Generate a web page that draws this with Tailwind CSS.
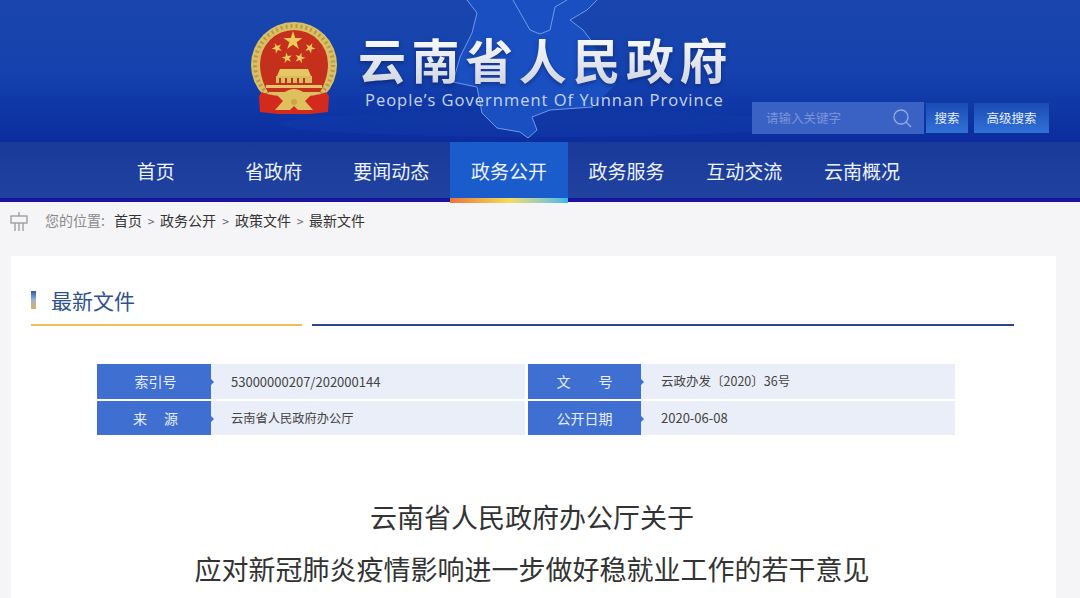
<!DOCTYPE html>
<html lang="zh">
<head>
<meta charset="utf-8">
<script src="https://cdn.jsdelivr.net/npm/@tailwindcss/browser@4"></script>
</head>
<body class="m-0">
<div class="relative w-[1080px] h-[598px] overflow-hidden bg-[#f5f5f7] font-['Noto_Sans_CJK_SC','Liberation_Sans',sans-serif]">

  <!-- header -->
  <header class="relative h-[142px] overflow-hidden bg-gradient-to-b from-[#1a45ad] via-[#1442ae] to-[#0c2c9e]">
    <svg class="absolute inset-0" width="1080" height="142" viewBox="0 0 1080 142" fill="none">
      <ellipse cx="540" cy="124" rx="260" ry="13" fill="#1c4ab4" opacity=".22"/>
      <ellipse cx="540" cy="117" rx="200" ry="9" fill="#0f379f" opacity=".5"/>
      <path d="M467 0 477 13 472 33 460 57 453 82 477 87 482 113 497 128 520 132 528 138 537 130 532 117 550 110 593 107 617 83 604 70 593 43 583 30 570 20 587 10 597 0Z" fill="#1a4fc2"/>
      <path d="M467 0 477 13 472 33 460 57 453 82 477 87 482 113 497 128 520 132 528 138 537 130 532 117 550 110 593 107 M513 0 530 30 540 34 550 30 555 7 567 0 M597 0 587 10 570 20 583 30 593 43" stroke="#6f9ae6" stroke-width="1"/>
    </svg>
    <div class="relative flex items-start pl-[250px]">
      <svg class="mt-[22px] shrink-0" width="88" height="94" viewBox="0 0 88 94">
        <defs>
          <polygon id="s" points="0,-1 .225,-.309 .951,-.309 .363,.118 .588,.809 0,.382 -.588,.809 -.363,.118 -.951,-.309 -.225,-.309" fill="#eec85c"/>
        </defs>
        <circle cx="44" cy="43" r="43" fill="#d9c067"/>
        <circle cx="44" cy="43" r="39" fill="none" stroke="#a98a34" stroke-width="4" stroke-dasharray="2 3" opacity=".7"/>
        <path d="M10 42a34 34 0 0 1 68 0c0 10-3 20-8 28H18c-5-8-8-18-8-28Z" fill="#c5301c"/>
        <use href="#s" transform="translate(43 19) scale(10)"/>
        <use href="#s" transform="translate(27 26) rotate(-25) scale(5.5)"/>
        <use href="#s" transform="translate(60 26) rotate(25) scale(5.5)"/>
        <use href="#s" transform="translate(37 36) rotate(-10) scale(5.5)"/>
        <use href="#s" transform="translate(50 36) rotate(15) scale(5.5)"/>
        <path d="M30 47h28l3 7H27Z" fill="#e6c766"/>
        <rect x="26" y="54" width="36" height="7" fill="#dcbc58"/>
        <path d="M29 56h2v5h-2Zm6 0h2v5h-2Zm6 0h2v5h-2Zm6 0h2v5h-2Zm6 0h2v5h-2Z" fill="#b3362a"/>
        <rect x="16" y="63" width="56" height="3" fill="#e4c76a"/>
        <path d="M12 70 9 74 10 90 28 92H60L78 90 79 74 76 70C66 76 22 76 12 70Z" fill="#d22a1d"/>
        <path d="M27 73c5-1 11-6 17-6s12 5 17 6l-6 6 8 9H48l-4-4-4 4H25l8-9Z" fill="#e0c05e"/>
        <circle cx="44" cy="80" r="3" fill="#c9a548"/>
      </svg>
      <div class="ml-[22px] w-[370px] shrink-0">
        <div class="mt-[31px] h-[54px] text-[48px] leading-[54px] font-bold tracking-[5.6px] -ml-[2px] whitespace-nowrap text-transparent bg-clip-text bg-gradient-to-b from-[#ffffff] to-[#d0d5e2] drop-shadow-[0_2px_2px_rgba(0,0,30,0.35)]">云南省人民政府</div>
        <div class="ml-[5px] mt-[4px] text-[16.5px] leading-[22px] tracking-[1px] whitespace-nowrap text-[#c5d4f2] font-['Open_Sans',sans-serif]">People’s Government Of Yunnan Province</div>
      </div>
      <div class="ml-[22px] mt-[102px] flex shrink-0">
        <div class="flex items-center justify-between w-[172px] h-[32px] pl-[14px] pr-[12px] bg-[#3a62c4] text-[12.5px] text-[#7a93d8]">
          <span>请输入关键字</span>
          <svg width="19" height="19" viewBox="0 0 19 19" fill="none" stroke="#93abdf" stroke-width="1.3"><circle cx="8" cy="8" r="7"/><path d="M13 13l5 5"/></svg>
        </div>
        <div class="ml-[2px] mt-[1px] flex items-center justify-center w-[42px] h-[30px] bg-gradient-to-b from-[#1a4bb4] to-[#3272d8] text-[12.5px] text-[#e6edfa]">搜索</div>
        <div class="ml-[6px] mt-[1px] flex items-center justify-center w-[75px] h-[30px] bg-gradient-to-b from-[#1a4bb4] to-[#3272d8] text-[12.5px] text-[#e6edfa]">高级搜索</div>
      </div>
    </div>
  </header>

  <!-- nav -->
  <nav class="h-[60px] bg-gradient-to-b from-[#1a3a9a] to-[#20429f] border-b-[4px] border-[#1a12a0]">
    <ul class="flex pl-[97px] h-[56px] text-[19px] text-[#eef3fc]">
      <li class="w-[117.7px] pt-[2px] flex items-center justify-center">首页</li>
      <li class="w-[117.7px] pt-[2px] flex items-center justify-center">省政府</li>
      <li class="w-[117.7px] pt-[2px] flex items-center justify-center">要闻动态</li>
      <li class="relative w-[117.7px] pt-[2px] flex items-center justify-center bg-[#1b5ccd]">政务公开
        <span class="absolute left-0 right-0 -bottom-[5px] h-[5px] bg-gradient-to-r from-[#e8743a] via-[#f2dc5a] to-[#35b6ec]"></span>
      </li>
      <li class="w-[117.7px] pt-[2px] flex items-center justify-center">政务服务</li>
      <li class="w-[117.7px] pt-[2px] flex items-center justify-center">互动交流</li>
      <li class="w-[117.7px] pt-[2px] flex items-center justify-center">云南概况</li>
    </ul>
  </nav>

  <!-- breadcrumb -->
  <div class="flex items-center h-[54px] pl-[10px] pb-[17px] text-[14px] text-[#333]">
    <svg class="mt-[2px] shrink-0" width="18" height="20" viewBox="0 0 18 20" fill="none" stroke="#999" stroke-width="1.3"><rect x="1" y="4" width="16" height="7"/><path d="M9 0v4M5 11v8M9 11v8M13 11v8"/></svg>
    <span class="ml-[17px] w-[69px] whitespace-nowrap text-[#8a8a8a]">您的位置:</span>
    <span>首页</span>
    <span class="w-[18px] text-center text-[12px] text-[#667]">&gt;</span>
    <span>政务公开</span>
    <span class="w-[19px] text-center text-[12px] text-[#667]">&gt;</span>
    <span>政策文件</span>
    <span class="w-[18px] text-center text-[12px] text-[#667]">&gt;</span>
    <span>最新文件</span>
  </div>

  <!-- card -->
  <main class="ml-[11px] w-[1045px] h-[400px] bg-white pt-[28px]">
    <div class="ml-[20px] flex items-center h-[34px]">
      <span class="w-[5px] h-[18px] -mt-[2px] bg-gradient-to-b from-[#2c55b0] via-[#9fb1cf] to-[#d8b050]"></span>
      <h2 class="ml-[15px] -mt-[3px] text-[21px] leading-[34px] text-[#2f528f] font-normal">最新文件</h2>
    </div>
    <div class="ml-[20px] mt-[6px] flex gap-[10px] h-[2px]">
      <span class="w-[271px] bg-[#f0be58]"></span>
      <span class="w-[702px] bg-[#29468f]"></span>
    </div>

    <div class="ml-[86px] mt-[38px] w-[858px] grid grid-cols-[428px_427px] gap-x-[3px] gap-y-[2px] text-[#444]">
      <div class="flex h-[35px]">
        <div class="relative w-[114px] pl-[3px] flex items-center justify-center bg-[#3f6fd1] text-[14px] text-[#e8eefb]">索引号<span class="absolute -right-[3px] top-[15px] border-y-[3px] border-l-[3px] border-y-transparent border-l-[#3f6fd1]"></span></div>
        <div class="flex-1 flex items-center pl-[20px] bg-[#eaeef8] text-[13px]">53000000207/202000144</div>
      </div>
      <div class="flex h-[35px]">
        <div class="relative w-[113px] flex items-center justify-center gap-[28px] bg-[#3f6fd1] text-[14px] text-[#e8eefb]"><span>文</span><span>号</span><span class="absolute -right-[3px] top-[15px] border-y-[3px] border-l-[3px] border-y-transparent border-l-[#3f6fd1]"></span></div>
        <div class="flex-1 flex items-center pl-[20px] bg-[#eaeef8] text-[12.5px]">云政办发〔2020〕36号</div>
      </div>
      <div class="flex h-[34px]">
        <div class="relative w-[114px] pl-[3px] flex items-center justify-center gap-[17px] bg-[#3f6fd1] text-[14px] text-[#e8eefb]"><span>来</span><span>源</span><span class="absolute -right-[3px] top-[15px] border-y-[3px] border-l-[3px] border-y-transparent border-l-[#3f6fd1]"></span></div>
        <div class="flex-1 flex items-center pl-[20px] bg-[#eaeef8] text-[12.25px]">云南省人民政府办公厅</div>
      </div>
      <div class="flex h-[34px]">
        <div class="relative w-[113px] flex items-center justify-center bg-[#3f6fd1] text-[14px] text-[#e8eefb]">公开日期<span class="absolute -right-[3px] top-[15px] border-y-[3px] border-l-[3px] border-y-transparent border-l-[#3f6fd1]"></span></div>
        <div class="flex-1 flex items-center pl-[20px] bg-[#eaeef8] text-[13px]">2020-06-08</div>
      </div>
    </div>

    <h1 class="mt-[56px] text-center pr-[3px] text-[27px] leading-[52px] font-normal text-[#333]">云南省人民政府办公厅关于<br>应对新冠肺炎疫情影响进一步做好稳就业工作的若干意见</h1>
  </main>
</div>
</body>
</html>
